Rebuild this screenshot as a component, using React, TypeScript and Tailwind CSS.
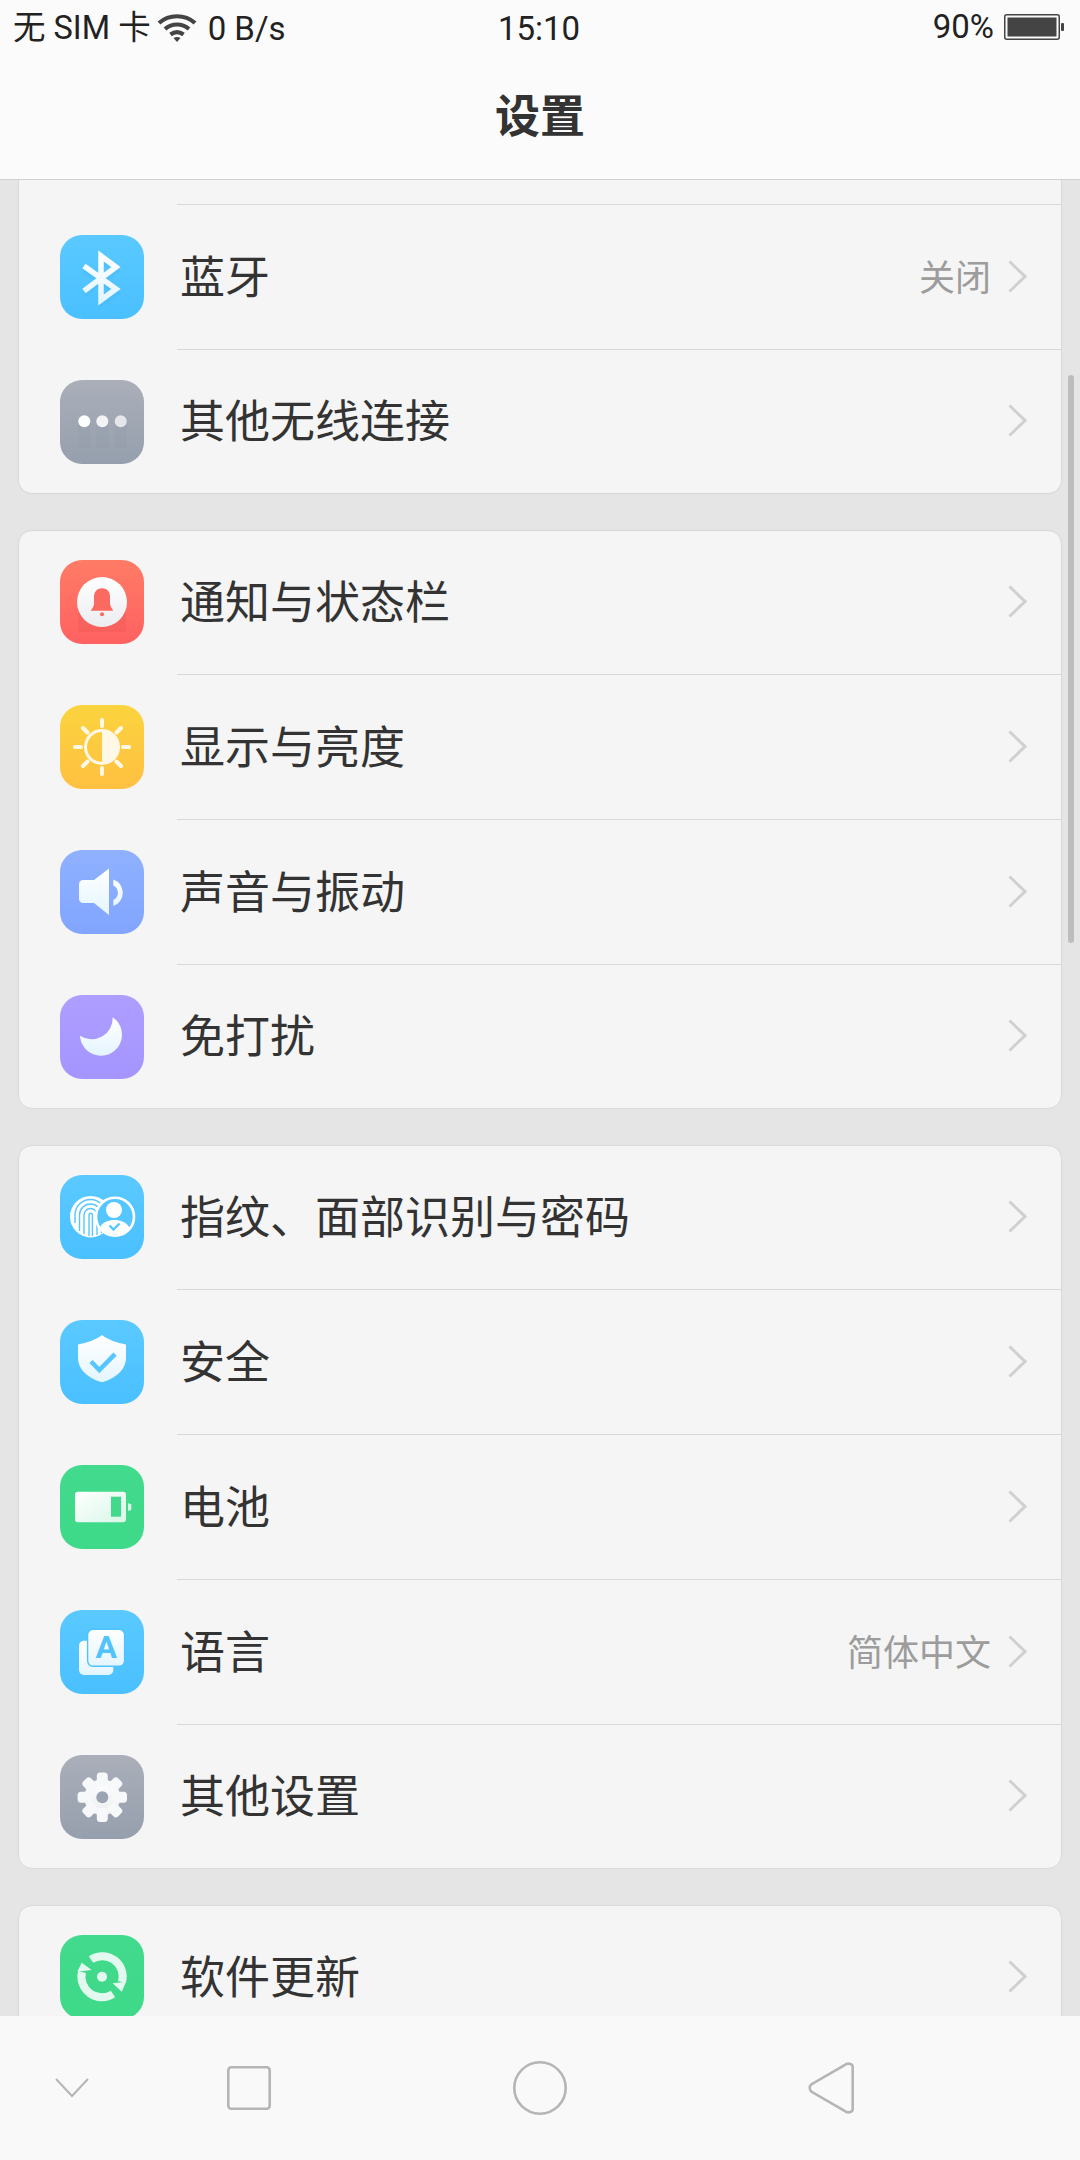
import type { ReactNode } from 'react'

const FONT = "font-['Noto_Sans_CJK_SC',sans-serif]"

type Item = {
  label: string
  value?: string
  gradient: string
  icon: ReactNode
}

const bluetooth = 'bg-linear-to-b from-[#5ac9ff] to-[#4ac0ff]'
const gray = 'bg-linear-to-b from-[#aaafb9] to-[#969fad]'
const green = 'bg-linear-to-b from-[#42da8c] to-[#3fd98a]'

// Rotated teeth for the gear icon
const TEETH = [0, 45, 90, 135, 180, 225, 270, 315]

const wireless: Item[] = [
  { label: '蓝牙', value: '关闭', gradient: bluetooth, icon: <BluetoothGlyph /> },
  { label: '其他无线连接', gradient: gray, icon: <DotsGlyph /> },
]

const system: Item[] = [
  { label: '通知与状态栏', gradient: 'bg-linear-to-b from-[#ff7b66] to-[#ff6161]', icon: <BellGlyph /> },
  { label: '显示与亮度', gradient: 'bg-linear-to-b from-[#fbd43e] to-[#ffc041]', icon: <SunGlyph /> },
  { label: '声音与振动', gradient: 'bg-linear-to-b from-[#90b1ff] to-[#81a5ff]', icon: <SpeakerGlyph /> },
  { label: '免打扰', gradient: 'bg-linear-to-b from-[#ae9eff] to-[#a495ff]', icon: <MoonGlyph /> },
]

const security: Item[] = [
  { label: '指纹、面部识别与密码', gradient: bluetooth, icon: <FaceGlyph /> },
  { label: '安全', gradient: bluetooth, icon: <ShieldGlyph /> },
  { label: '电池', gradient: green, icon: <BatteryGlyph /> },
  { label: '语言', value: '简体中文', gradient: bluetooth, icon: <LanguageGlyph /> },
  { label: '其他设置', gradient: gray, icon: <GearGlyph /> },
]

export default function App() {
  return (
    <div className={`flex h-[2160px] w-[1080px] flex-col overflow-hidden bg-[#e5e5e5] text-[#333333] ${FONT}`}>
      <svg className="absolute h-0 w-0" aria-hidden="true">
        <defs>
          <linearGradient id="glyph" x1="0" y1="0" x2="0" y2="1">
            <stop offset="0" stopColor="#ffffff" />
            <stop offset="1" stopColor="#e4f5ff" />
          </linearGradient>
          <linearGradient id="glyph-green" x1="0" y1="0" x2="1" y2="1">
            <stop offset="0" stopColor="#ffffff" />
            <stop offset="1" stopColor="#d8f7e7" />
          </linearGradient>
          <linearGradient id="glyph-gray" x1="0" y1="0" x2="0" y2="1">
            <stop offset="0" stopColor="#ffffff" />
            <stop offset="1" stopColor="#ebedf0" />
          </linearGradient>
        </defs>
      </svg>

      <header className="shrink-0 border-b border-[#d2d2d2] bg-[#fbfbfb]">
        <StatusBar />
        <div className="flex h-[123px] items-start justify-center pt-[28px]">
          <h1 className="text-[45px] leading-[60px] font-bold">设置</h1>
        </div>
      </header>

      <main className="relative min-h-0 flex-1 overflow-hidden">
        {/* First card is scrolled under the header, so it has no top edge */}
        <section className="mx-[18px] rounded-b-[14px] border-x border-b border-[#d8d8d8] bg-[#f5f5f5]">
          <div className="ml-[158px] h-[25px] border-b border-[#d8d8d8]" />
          {wireless.map((item, i) => (
            <Row key={item.label} item={item} first={false} last={i === wireless.length - 1} />
          ))}
        </section>
        <Card items={system} />
        <Card items={security} />
        <Card items={[{ label: '软件更新', gradient: green, icon: <UpdateGlyph /> }]} />
        <div className="absolute top-[195px] right-[6px] h-[568px] w-[6px] rounded-full bg-[#bdbdbd]" />
      </main>

      <NavBar />
    </div>
  )
}

function StatusBar() {
  return (
    <div className="flex h-[56px] items-center px-[13px] text-[33px] leading-none font-['Roboto','Noto_Sans_CJK_SC',sans-serif] text-[#222222]">
      <div className="flex flex-1 items-center gap-[6px]">
        <span className="text-[32.5px]">无 SIM 卡</span>
        <svg viewBox="0 0 40 28" className="h-[28px] w-[40px]" fill="none" stroke="#444444" strokeWidth="4.2">
          <path d="M2 9c10-9 26-9 36 0" />
          <path d="M8 15c7-6 17-6 24 0" />
          <path d="M13.5 20.500c4-3 9-3 13 0" />
          <path d="M16.500 24l3.500 4 3.500-4c-2-1.200-5-1.200-7 0z" fill="#444444" stroke="none" />
        </svg>
        <span className="ml-[5px]">0 B/s</span>
      </div>
      <span className="flex-1 text-center">15:10</span>
      <div className="flex flex-1 items-center justify-end gap-[10px] pr-[2px]">
        <span className="-mt-[4px]">90%</span>
        <svg viewBox="0 0 61 26" className="-mt-[2px] h-[26px] w-[61px]">
          <rect x="0.75" y="0.75" width="54.5" height="24.5" rx="2" fill="none" stroke="#444444" strokeWidth="1.5" />
          <rect x="3.5" y="3.5" width="49" height="19" fill="#444444" />
          <rect x="57" y="9" width="3" height="8" rx="1" fill="#444444" />
        </svg>
      </div>
    </div>
  )
}

function Card({ items }: { items: Item[] }) {
  return (
    <section className="mx-[18px] mt-9 rounded-[14px] border border-[#d8d8d8] bg-[#f5f5f5]">
      {items.map((item, i) => (
        <Row key={item.label} item={item} first={i === 0} last={i === items.length - 1} />
      ))}
    </section>
  )
}

function Row({ item, first, last }: { item: Item; first: boolean; last: boolean }) {
  return (
    <div className={`flex ${last ? 'h-[143px]' : first ? 'h-[144px]' : 'h-[145px]'}`}>
      <div className={`flex w-[158px] shrink-0 items-start pl-[41px] ${first ? 'pt-[29px]' : 'pt-[30px]'}`}>
        <div className={`h-[84px] w-[84px] overflow-hidden rounded-[22px] ${item.gradient}`}>{item.icon}</div>
      </div>
      <div className={`flex flex-1 items-center pr-[34px] ${last ? '' : 'border-b border-[#d8d8d8]'}`}>
        <span className="-mt-[6px] ml-[3px] flex-1 text-[45px] leading-none">{item.label}</span>
        {item.value && <span className="mr-[17px] -mt-[5px] text-[36px] leading-none text-[#9c9c9c]">{item.value}</span>}
        <svg viewBox="0 0 19 33" className="-mt-[2px] h-[33px] w-[19px]" fill="none" stroke="#d0d0d0" strokeWidth="3">
          <path d="M1.5 1.5L17 16.5 1.5 31.5" />
        </svg>
      </div>
    </div>
  )
}

function NavBar() {
  return (
    <nav className="flex h-[144px] shrink-0 items-center bg-[#f9f9f9] pl-[55px]">
      <svg viewBox="0 0 34 20" className="h-[20px] w-[34px]" fill="none" stroke="#b5b5b5" strokeWidth="2">
        <path d="M1 1l16 17L33 1" />
      </svg>
      <svg viewBox="0 0 44 44" className="ml-[138px] h-[44px] w-[44px]" fill="none" stroke="#b5b5b5" strokeWidth="2.6">
        <rect x="1.3" y="1.3" width="41.4" height="41.4" rx="3" />
      </svg>
      <svg viewBox="0 0 54 54" className="ml-[242px] h-[54px] w-[54px]" fill="none" stroke="#b5b5b5" strokeWidth="2.6">
        <circle cx="27" cy="27" r="25.7" />
      </svg>
      <svg viewBox="0 0 46 52" className="ml-[241px] h-[52px] w-[46px]" fill="none" stroke="#b5b5b5" strokeWidth="2.6">
        <path d="M36.5 3.2C38.8.9 44.7 1 44.7 5v42c0 4-5.9 4.1-8.2 1.8L3.2 29.5c-1.9-2-1.9-5 0-7z" />
      </svg>
    </nav>
  )
}

function Glyph({ children }: { children: ReactNode }) {
  return (
    <svg viewBox="0 0 84 84" className="h-full w-full">
      {children}
    </svg>
  )
}

function BluetoothGlyph() {
  return (
    <Glyph>
      <path d="M24 31l32 23-15 11V21l15 11-32 24" fill="none" stroke="#38a9e6" strokeOpacity="0.15" strokeWidth="5.500" transform="translate(0 4)" />
      <path d="M24 31l32 23-15 11V21l15 11-32 24" fill="none" stroke="url(#glyph)" strokeWidth="5.500" />
    </Glyph>
  )
}

function DotsGlyph() {
  return (
    <Glyph>
      <rect x="18.5" y="42" width="12" height="26" fill="#8d96a5" opacity="0.18" />
      <rect x="36.5" y="42" width="12" height="26" fill="#8d96a5" opacity="0.18" />
      <rect x="55" y="42" width="12" height="26" fill="#8d96a5" opacity="0.18" />
      <circle cx="24.3" cy="41.3" r="6" fill="#ffffff" />
      <circle cx="42.3" cy="41.3" r="6" fill="#f2f3f5" />
      <circle cx="60.7" cy="41.3" r="6" fill="#e4e6ea" />
    </Glyph>
  )
}

function BellGlyph() {
  return (
    <Glyph>
      <rect x="18" y="42" width="48" height="30" fill="#e85454" opacity="0.3" />
      <circle cx="42" cy="42" r="25" fill="url(#glyph-gray)" />
      <path
        d="M42 28.3c-5.5 0-8 4-8 9v6c0 3-1.6 5-3.3 7.5h22.6C51.6 48 50 46 50 43v-6c0-5-2.5-8.7-8-8.7z"
        fill="#fb6a60"
      />
      <circle cx="42" cy="54.2" r="2" fill="#fb6a60" />
    </Glyph>
  )
}

function SunGlyph() {
  return (
    <Glyph>
      <g stroke="#fff8e6" strokeWidth="4" strokeLinecap="round">
        <path d="M42 15v6" />
        <path d="M42 63v6" />
        <path d="M15 42h6" />
        <path d="M63 42h6" />
        <path d="M23 23l4.5 4.5" />
        <path d="M61 23l-4.5 4.5" />
        <path d="M23 61l4.5-4.5" />
        <path d="M61 61l-4.5-4.5" />
      </g>
      <circle cx="42" cy="42" r="16.5" fill="none" stroke="#fff8e6" strokeWidth="3" />
      <path d="M42 25.5a16.5 16.5 0 0 1 0 33z" fill="#fff8e6" />
    </Glyph>
  )
}

function SpeakerGlyph() {
  return (
    <Glyph>
      <path
        d="M49 18.5v46.5L34 53H23c-2.2 0-4-1.8-4-4V34c0-2.200 1.800-4 4-4h11z"
        fill="url(#glyph)"
      />
      <path d="M53.300 29.500A14 14 0 0 1 53.300 56v-6a8 8 0 0 0 0-14.500z" fill="url(#glyph)" />
    </Glyph>
  )
}

function MoonGlyph() {
  return (
    <Glyph>
      <path d="M52.700 22.300A21 21 0 1 1 20 40.700 21 21 0 0 0 52.700 22.300z" fill="url(#glyph)" />
    </Glyph>
  )
}

function FaceGlyph() {
  return (
    <Glyph>
      <circle cx="30.700" cy="41.700" r="20.700" fill="#ffffff" />
      <g fill="none" stroke="#55c6ff" strokeWidth="1.400">
        <path d="M19.500 56V40a11 11 0 0 1 22 0v18" />
        <path d="M24 59V40a6.500 6.500 0 0 1 13 0v20" />
        <path d="M29 61V40a1.700 1.700 0 0 1 3.400 0v21" />
        <path d="M15 48v-8a15.500 15.500 0 0 1 31 0v12" />
      </g>
      <circle cx="55" cy="41.700" r="19" fill="#55c6ff" stroke="#ffffff" strokeWidth="2.600" />
      <circle cx="54" cy="35" r="8" fill="#ffffff" />
      <path d="M39.500 53c3-6 9-8 15-8s11.500 2 15.500 8c-3.500 4-9 6.500-15 6.500S43 57 39.500 53z" fill="#ffffff" />
      <path d="M49.500 50.500l4 4 6-6" fill="none" stroke="#55c6ff" strokeWidth="2.400" />
    </Glyph>
  )
}

function ShieldGlyph() {
  return (
    <Glyph>
      <path
        d="M42 15c6 4.500 15 8 24 9.500V38c0 12-11 20.500-24 24.300C29 58.500 18 50 18 38V24.500C27 23 36 19.500 42 15z"
        fill="url(#glyph)"
      />
      <path d="M31 41.500l8.300 8.500L55 34.200" fill="none" stroke="#55c6ff" strokeWidth="4.500" />
    </Glyph>
  )
}

function BatteryGlyph() {
  return (
    <Glyph>
      <rect x="15" y="26.700" width="51" height="30.600" rx="3" fill="url(#glyph-green)" />
      <rect x="51" y="31.700" width="10" height="20" fill="#41d98b" />
      <path d="M68 38.300l3.300 1V45l-3.300 1z" fill="#d8f7e7" />
    </Glyph>
  )
}

function LanguageGlyph() {
  return (
    <Glyph>
      <rect x="19" y="30.700" width="34.300" height="34.300" rx="5" fill="url(#glyph)" />
      <rect x="27.600" y="19.300" width="37" height="37" rx="5.500" fill="url(#glyph)" stroke="#4fc3ff" strokeWidth="1.400" />
      <text
        x="46.300"
        y="48.300"
        textAnchor="middle"
        fill="#52c4fb"
        fontFamily="Roboto, sans-serif"
        fontWeight="700"
        fontSize="32"
      >
        A
      </text>
    </Glyph>
  )
}

function GearGlyph() {
  return (
    <Glyph>
      <g fill="url(#glyph-gray)">
        <circle cx="42.300" cy="42.300" r="18" />
        {TEETH.map((deg) => (
          <rect
            key={deg}
            x="36.800"
            y="17.600"
            width="11"
            height="14"
            rx="3.500"
            fill="#f7f8f9"
            transform={`rotate(${deg} 42.300 42.300)`}
          />
        ))}
      </g>
      <circle cx="42.300" cy="42.300" r="6" fill="#9da4b1" />
    </Glyph>
  )
}

function UpdateGlyph() {
  return (
    <Glyph>
      <g fill="none" stroke="#e3f9ef" strokeWidth="8">
        <path d="M31 24.500A20.500 20.500 0 0 1 62 47" />
        <path d="M53 59A20.500 20.500 0 0 1 22 37" />
      </g>
      <path d="M66 46.700L52.700 48.300l9 8.400z" fill="#e3f9ef" />
      <path d="M17.300 36.700L31.700 35l-10-7.300z" fill="#e3f9ef" />
      <circle cx="42" cy="41.700" r="5" fill="#e3f9ef" />
    </Glyph>
  )
}
